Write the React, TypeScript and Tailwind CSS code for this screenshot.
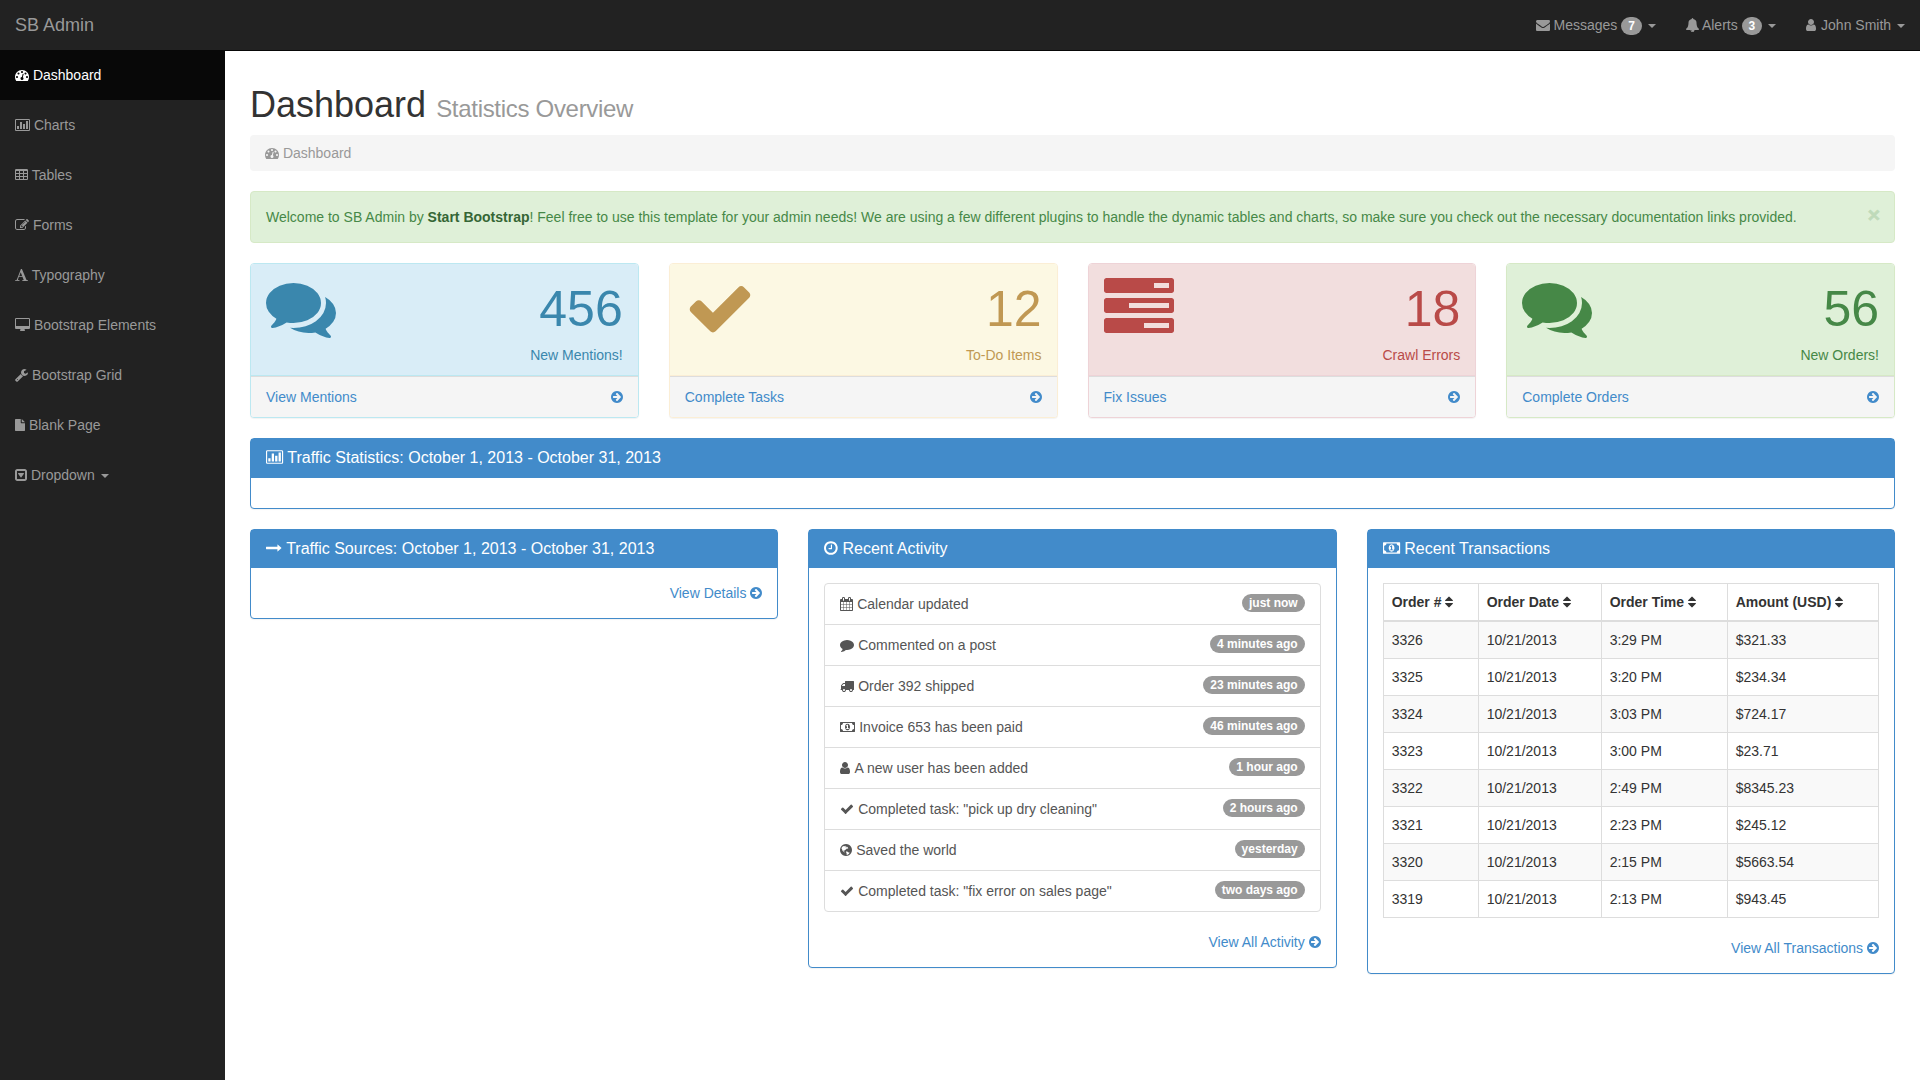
import { ReactElement, ReactNode } from "react"
import clsx from "clsx"

type Glyph = { x?: number; adv: number; d: string }

// glyphs sit on a 1792 unit em with the baseline at 1536
const glyphs = {
  dashboard: {
    adv: 1792,
    d: "M384 1152q0-53-37.5-90.5t-90.5-37.5-90.5 37.5-37.5 90.5 37.5 90.5 90.5 37.5 90.5-37.5 37.5-90.5zm192-448q0-53-37.5-90.5t-90.5-37.5-90.5 37.5-37.5 90.5 37.5 90.5 90.5 37.5 90.5-37.5 37.5-90.5zm428 481l101-382q6-26-7.5-48.5t-38.5-29.5-48 6.5-30 39.5l-101 382q-60 5-107 43.5t-63 98.5q-20 77 20 146t117 89 146-20 89-117q16-60-6-117t-72-91zm660-33q0-53-37.5-90.5t-90.5-37.5-90.5 37.5-37.5 90.5 37.5 90.5 90.5 37.5 90.5-37.5 37.5-90.5zm-640-640q0-53-37.5-90.5t-90.5-37.5-90.5 37.5-37.5 90.5 37.5 90.5 90.5 37.5 90.5-37.5 37.5-90.5zm448 192q0-53-37.5-90.5t-90.5-37.5-90.5 37.5-37.5 90.5 37.5 90.5 90.5 37.5 90.5-37.5 37.5-90.5zm320 448q0 261-141 483-19 29-54 29h-1402q-35 0-54-29-141-221-141-483 0-182 71-348t191-286 286-191 348-71 348 71 286 191 191 286 71 348z",
  },
  chart: {
    adv: 1920,
    d: "M512 1024v384h-256v-384zM896 512v896h-256v-896zM1280 768v640h-256v-640zM1664 384v1024h-256v-1024zM1792 1504v-1216q0-13-9.5-22.5t-22.5-9.5h-1600q-13 0-22.5 9.5t-9.5 22.5v1216q0 13 9.5 22.5t22.5 9.5h1600q13 0 22.5-9.5t9.5-22.5zM1920 288v1216q0 66-47 113t-113 47h-1600q-66 0-113-47t-47-113v-1216q0-66 47-113t113-47h1600q66 0 113 47t47 113z",
  },
  table: {
    x: 64,
    adv: 1664,
    d: "M192 416q0-32 32-32h320q32 0 32 32v192q0 32-32 32h-320q-32 0-32-32zM704 416q0-32 32-32h320q32 0 32 32v192q0 32-32 32h-320q-32 0-32-32zM1216 416q0-32 32-32h320q32 0 32 32v192q0 32-32 32h-320q-32 0-32-32zM192 800q0-32 32-32h320q32 0 32 32v192q0 32-32 32h-320q-32 0-32-32zM704 800q0-32 32-32h320q32 0 32 32v192q0 32-32 32h-320q-32 0-32-32zM1216 800q0-32 32-32h320q32 0 32 32v192q0 32-32 32h-320q-32 0-32-32zM192 1184q0-32 32-32h320q32 0 32 32v192q0 32-32 32h-320q-32 0-32-32zM704 1184q0-32 32-32h320q32 0 32 32v192q0 32-32 32h-320q-32 0-32-32zM1216 1184q0-32 32-32h320q32 0 32 32v192q0 32-32 32h-320q-32 0-32-32zM1728 288v1088q0 66-47 113t-113 47h-1344q-66 0-113-47t-47-113v-1088q0-66 47-113t113-47h1344q66 0 113 47t47 113z",
  },
  edit: {
    adv: 1792,
    d: "M888 1184l116-116-152-152-116 116v56h96v96h56zm440-720q-16-16-33 1l-350 350q-17 17-1 33t33-1l350-350q17-17 1-33zm80 594v190q0 119-84.5 203.5t-203.5 84.5h-832q-119 0-203.5-84.5t-84.5-203.5v-832q0-119 84.5-203.5t203.5-84.5h832q63 0 117 25 15 7 18 23 3 17-9 29l-49 49q-14 14-32 8-23-6-45-6h-832q-66 0-113 47t-47 113v832q0 66 47 113t113 47h832q66 0 113-47t47-113v-126q0-13 9-22l64-64q15-15 35-7t20 29zm-96-738l288 288-672 672h-288v-288zm444 132l-92 92-288-288 92-92q28-28 68-28t68 28l152 152q28 28 28 68t-28 68z",
  },
  font: {
    x: 64,
    adv: 1664,
    d: "M789 559l-170 450q33 0 136.5 2t160.5 2q19 0 57-2-87-253-184-452zm-725 1105l2-79q23-7 56-12.5t57-10.5 49.5-14.5 44.5-29 31-50.5l237-616 280-724h128q8 14 11 21l205 480q33 78 106 257.5t114 274.5q15 34 58 144.5t72 168.5q20 45 35 57 19 15 88 29.5t84 20.5q6 38 6 57 0 4-.5 13t-.5 13q-63 0-190-8t-191-8q-76 0-215 7t-178 8q0-43 4-78l131-28q1 0 12.5-2.5t15.5-3.5 14.5-4.5 15-6.5 11-8 9-11 2.5-14q0-16-31-96.5t-72-177.5-42-100l-450-2q-26 58-76.5 195.5t-50.5 162.5q0 22 14 37.5t43.5 24.5 48.5 13.5 57 8.5 41 4q1 19 1 58 0 9-2 27-58 0-174.5-10t-174.5-10q-8 0-26.5 4t-21.5 4q-80 14-188 14z",
  },
  desktop: {
    adv: 1920,
    d: "M1792 992v-832q0-13-9.5-22.5t-22.5-9.5h-1600q-13 0-22.5 9.5t-9.5 22.5v832q0 13 9.5 22.5t22.5 9.5h1600q13 0 22.5-9.5t9.5-22.5zM1920 160v1088q0 66-47 113t-113 47h-544q0 37 16 77.5t32 71 16 43.5q0 26-19 45t-45 19h-512q-26 0-45-19t-19-45q0-14 16-44t32-70 16-78h-544q-66 0-113-47t-47-113v-1088q0-66 47-113t113-47h1600q66 0 113 47t47 113z",
  },
  wrench: {
    x: 64,
    adv: 1664,
    d: "M448 1472q0-26-19-45t-45-19-45 19-19 45 19 45 45 19 45-19 19-45zm644-420l-682 682q-37 37-90 37-52 0-91-37l-106-108q-38-36-38-90 0-53 38-91l681-681q39 98 114.5 173.5t173.5 114.5zm634-435q0 39-23 106-47 134-164.5 217.5t-258.5 83.5q-185 0-316.5-131.5t-131.5-316.5 131.5-316.5 316.5-131.5q58 0 121.5 16.5t107.5 46.5q16 11 16 28t-16 28l-293 169v224l193 107q5-3 79-48.5t135.5-81 70.5-35.5q15 0 23.5 10t8.5 25z",
  },
  file: {
    adv: 1280,
    d: "M96 128h640v448q0 40 28 68t68 28h448v896q0 40-28 68t-68 28h-1088q-40 0-68-28t-28-68v-1344q0-40 28-68t68-28zM864 128q20 10 34 24l358 358q14 14 24 34h-416z",
  },
  caretSquare: {
    adv: 1536,
    d: "M1145 675q18 35-5 66l-320 448q-19 27-52 27t-52-27l-320-448q-23-31-5-66 17-35 57-35h640q40 0 57 35zM1280 1376v-960q0-13-9.5-22.5t-22.5-9.5h-960q-13 0-22.5 9.5t-9.5 22.5v960q0 13 9.5 22.5t22.5 9.5h960q13 0 22.5-9.5t9.5-22.5zM1536 416v960q0 119-84.5 203.5t-203.5 84.5h-960q-119 0-203.5-84.5t-84.5-203.5v-960q0-119 84.5-203.5t203.5-84.5h960q119 0 203.5 84.5t84.5 203.5z",
  },
  envelope: {
    adv: 1792,
    d: "M1792 710v794q0 66-47 113t-113 47h-1472q-66 0-113-47t-47-113v-794q44 49 101 87 362 246 497 345 57 42 92.5 65.5t94.5 48 110 24.5h2q51 0 110-24.5t94.5-48 92.5-65.5q170-123 498-345 57-39 100-87zm0-294q0 79-49 151t-122 123q-376 261-468 325-10 7-42.5 31t-54 38.5-52 32.5-57.5 27-50 9h-2q-23 0-50-9t-57.5-27-52-32.5-54-38.5-42.5-31q-91-64-262-182.5t-205-142.5q-62-42-117-115.5t-55-136.5q0-78 41.5-130t118.5-52h1472q65 0 112.5 47t47.5 113z",
  },
  bell: {
    x: 64,
    adv: 1664,
    d: "M912 1696q0-16-16-16-59 0-101.5-42.5t-42.5-101.5q0-16-16-16t-16 16q0 73 51.5 124.5t124.5 51.5q16 0 16-16zm816-288q0 52-38 90t-90 38h-448q0 106-75 181t-181 75-181-75-75-181h-448q-52 0-90-38t-38-90q50-42 91-88t85-119.5 74.5-158.5 50-206 19.5-260q0-152 117-282.5t307-158.5q-8-19-8-39 0-40 28-68t68-28 68 28 28 68q0 20-8 39 190 28 307 158.5t117 282.5q0 139 19.5 260t50 206 74.5 158.5 85 119.5 91 88z",
  },
  user: {
    x: 256,
    adv: 1408,
    d: "M1536 1399q0 109-62.5 187t-150.5 78h-854q-88 0-150.5-78t-62.5-187q0-85 8.5-160.5t31.5-152 58.5-131 94-89 134.5-34.5q131 128 313 128t313-128q76 0 134.5 34.5t94 89 58.5 131 31.5 152 8.5 160.5zm-256-887q0 159-112.5 271.5t-271.5 112.5-271.5-112.5-112.5-271.5 112.5-271.5 271.5-112.5 271.5 112.5 112.5 271.5z",
  },
  comments: {
    adv: 1792,
    d: "M1408 768q0 139-94 257t-256.5 186.5-353.5 68.5q-86 0-176-16-124 88-278 128-36 9-86 16h-3q-11 0-20.5-8t-11.5-21q-1-3-1-6.5t.5-6.5 2-6l2.5-5t3.5-5.5 4-5 4.5-5 4-4.5q5-6 23-25t26-29.5 22.5-29 25-38.5 20.5-44q-124-72-195-177t-71-224q0-139 94-257t256.5-186.5 353.5-68.5 353.5 68.5 256.5 186.5 94 257zm384 256q0 120-71 224.5t-195 176.5q10 24 20.5 44t25 38.5 22.5 29 26 29.5 23 25q1 1 4 4.5t4.5 5 4 5 3.5 5.5l2.5 5t2 6 .5 6.5-1 6.5q-3 14-13 22t-22 7q-50-7-86-16-154-40-278-128-90 16-176 16-271 0-472-132 58 4 88 4 161 0 309-45t264-129q125-92 192-212t67-254q0-77-23-152 129 71 204 178t75 230z",
  },
  check: {
    adv: 1792,
    d: "M1671 566q0 40-28 68l-724 724-136 136q-28 28-68 28t-68-28l-136-136-362-362q-28-28-28-68t28-68l136-136q28-28 68-28t68 28l294 295 656-657q28-28 68-28t68 28l136 136q28 28 28 68z",
  },
  tasks: {
    adv: 1792,
    d: "M1024 1408h640v-128h-640zM640 896h1024v-128h-1024zM1280 384h384v-128h-384zM1792 1216v256q0 26-19 45t-45 19h-1664q-26 0-45-19t-19-45v-256q0-26 19-45t45-19h1664q26 0 45 19t19 45zM1792 704v256q0 26-19 45t-45 19h-1664q-26 0-45-19t-19-45v-256q0-26 19-45t45-19h1664q26 0 45 19t19 45zM1792 192v256q0 26-19 45t-45 19h-1664q-26 0-45-19t-19-45v-256q0-26 19-45t45-19h1664q26 0 45 19t19 45z",
  },
  arrowCircle: {
    x: 128,
    adv: 1536,
    d: "M1413 896q0-27-18-45l-91-91-362-362q-18-18-45-18t-45 18l-91 91q-18 18-18 45t18 45l189 189h-502q-26 0-45 19t-19 45v128q0 26 19 45t45 19h502l-189 189q-19 19-19 45t19 45l91 91q18 18 45 18t45-18l362-362 91-91q18-18 18-45zm251 0q0 209-103 385.5t-279.5 279.5-385.5 103-385.5-103-279.5-279.5-103-385.5 103-385.5 279.5-279.5 385.5-103 385.5 103 279.5 279.5 103 385.5z",
  },
  longArrow: {
    adv: 1792,
    d: "M1728 893q0 14-10 24l-384 354q-16 14-35 6-19-9-19-29v-224h-1248q-14 0-23-9t-9-23v-192q0-14 9-23t23-9h1248v-224q0-21 19-29t35 5l384 350q10 10 10 23z",
  },
  clock: {
    x: 128,
    adv: 1536,
    d: "M1024 544v448q0 14-9 23t-23 9h-320q-14 0-23-9t-9-23v-64q0-14 9-23t23-9h224v-352q0-14 9-23t23-9h64q14 0 23 9t9 23zm416 352q0-148-73-273t-198-198-273-73-273 73-198 198-73 273 73 273 198 198 273 73 273-73 198-198 73-273zm224 0q0 209-103 385.5t-279.5 279.5-385.5 103-385.5-103-279.5-279.5-103-385.5 103-385.5 279.5-279.5 385.5-103 385.5 103 279.5 279.5 103 385.5z",
  },
  money: {
    adv: 1920,
    d: "M768 1152h384v-96h-128v-448h-114l-148 137 77 80q42-37 55-57h2v288h-128zM1280 896q0 70-21 142t-59.5 134-101.5 101-138 39-138-39-101.5-101-59.5-134-21-142 21-142 59.5-134 101.5-101 138-39 138 39 101.5 101 59.5 134 21 142zM1792 1152v-512q-106 0-181-75t-75-181h-1152q0 106-75 181t-181 75v512q106 0 181 75t75 181h1152q0-106 75-181t181-75zM1920 320v1152q0 26-19 45t-45 19h-1792q-26 0-45-19t-19-45v-1152q0-26 19-45t45-19h1792q26 0 45 19t19 45z",
  },
  calendar: {
    x: 64,
    adv: 1664,
    d: "M192 1664h288v-288h-288zM544 1664h320v-288h-320zM192 1312h288v-320h-288zM544 1312h320v-320h-320zM192 928h288v-288h-288zM928 1664h320v-288h-320zM544 928h320v-288h-320zM1312 1664h288v-288h-288zM928 1312h320v-320h-320zM576 448v-288q0-13-9.5-22.5t-22.5-9.5h-64q-13 0-22.5 9.5t-9.5 22.5v288q0 13 9.5 22.5t22.5 9.5h64q13 0 22.5-9.5t9.5-22.5zM1312 1312h288v-320h-288zM928 928h320v-288h-320zM1312 928h288v-288h-288zM1344 448v-288q0-13-9.5-22.5t-22.5-9.5h-64q-13 0-22.5 9.5t-9.5 22.5v288q0 13 9.5 22.5t22.5 9.5h64q13 0 22.5-9.5t9.5-22.5zM1728 384v1280q0 52-38 90t-90 38h-1408q-52 0-90-38t-38-90v-1280q0-52 38-90t90-38h128v-96q0-66 47-113t113-47h64q66 0 113 47t47 113v96h384v-96q0-66 47-113t113-47h64q66 0 113 47t47 113v96h128q52 0 90 38t38 90z",
  },
  comment: {
    adv: 1792,
    d: "M1792 896q0 174-120 321.5t-326 233-450 85.5q-70 0-145-8-198 175-460 242-49 14-114 22-17 2-30.5-9t-17.5-29v-1q-3-4-.5-12t2-10 4.5-9.5l6-9 7-8.5 8-9q7-8 31-34.5t34.5-38 31-39.5 32.5-51 27-59 26-76q-157-89-247.5-220t-90.5-281q0-130 71-248.5t191-204.5 286-136.5 348-50.5q244 0 450 85.5t326 233 120 321.5z",
  },
  truck: {
    adv: 1792,
    d: "M640 1408q0-52-38-90t-90-38-90 38-38 90 38 90 90 38 90-38 38-90zM256 896h384v-256h-158q-13 0-22 9l-195 195q-9 9-9 22v30zM1536 1408q0-52-38-90t-90-38-90 38-38 90 38 90 90 38 90-38 38-90zM1792 320v1024q0 15-4 26.5t-13.5 18.5-16.5 11.5-23.5 6-22.5 2-25.5 0-22.5-.5q0 106-75 181t-181 75-181-75-75-181h-384q0 106-75 181t-181 75-181-75-75-181h-64q-3 0-22.5.5t-25.5 0-22.5-2-23.5-6-16.5-11.5-13.5-18.5-4-26.5q0-26 19-45t45-19v-320q0-8-.5-35t0-38 2.5-34.5 6.5-37 14-30.5 22.5-30l198-198q19-19 50.5-32t58.5-13h160v-192q0-26 19-45t45-19h1024q26 0 45 19t19 45z",
  },
  globe: {
    x: 128,
    adv: 1536,
    d: "M896 128q209 0 385.5 103t279.5 279.5 103 385.5-103 385.5-279.5 279.5-385.5 103-385.5-103-279.5-279.5-103-385.5 103-385.5 279.5-279.5 385.5-103zM420 480l180-110 120 40 110-50 60 70-90 90 130 40 40-110 110 60 110 150-120 60-60-20-130 120-110 70-20 100-90-50-90 50 20 90 90 20 50 110-130-50-150-170-60-200-80-130zM900 1080l150 10 180 110 130 30-80 140-130 110-130 70-60-110 20-160-100-110z",
  },
  sort: {
    x: 384,
    adv: 1024,
    d: "M1408 1088q0 26-19 45l-448 448q-19 19-45 19t-45-19l-448-448q-19-19-19-45t19-45 45-19h896q26 0 45 19t19 45zm0-384q0 26-19 45t-45 19h-896q-26 0-45-19t-19-45 19-45l448-448q19-19 45-19t45 19l448 448q19 19 19 45z",
  },
} satisfies Record<string, Glyph>

type IconName = keyof typeof glyphs

function Icon({ name, className }: { name: IconName; className?: string }): ReactElement {
  const glyph: Glyph = glyphs[name]
  return (
    <svg
      className={clsx("inline overflow-visible align-[-0.143em]", className)}
      width={`${glyph.adv / 1792}em`}
      height="1em"
      viewBox={`${glyph.x ?? 0} 0 ${glyph.adv} 1792`}
      fill="currentColor"
      fillRule="evenodd"
      aria-hidden="true"
    >
      <path d={glyph.d} />
    </svg>
  )
}

function Caret(): ReactElement {
  return (
    <span className="ml-0.5 inline-block border-x-4 border-t-4 border-x-transparent border-t-current align-middle" />
  )
}

function Badge({ children }: { children: ReactNode }): ReactElement {
  return (
    <span className="inline-block rounded-[10px] bg-[#999] px-[7px] py-[3px] text-center align-baseline text-xs leading-none font-bold whitespace-nowrap text-white">
      {children}
    </span>
  )
}

const menu: { icon: IconName; label: string; caret?: boolean }[] = [
  { icon: "dashboard", label: "Dashboard" },
  { icon: "chart", label: "Charts" },
  { icon: "table", label: "Tables" },
  { icon: "edit", label: "Forms" },
  { icon: "font", label: "Typography" },
  { icon: "desktop", label: "Bootstrap Elements" },
  { icon: "wrench", label: "Bootstrap Grid" },
  { icon: "file", label: "Blank Page" },
  { icon: "caretSquare", label: "Dropdown", caret: true },
]

const stats: {
  icon: IconName
  value: number
  label: string
  link: string
  border: string
  heading: string
}[] = [
  {
    icon: "comments",
    value: 456,
    label: "New Mentions!",
    link: "View Mentions",
    border: "border-[#bce8f1]",
    heading: "bg-[#d9edf7] text-[#3a87ad]",
  },
  {
    icon: "check",
    value: 12,
    label: "To-Do Items",
    link: "Complete Tasks",
    border: "border-[#fbeed5]",
    heading: "bg-[#fcf8e3] text-[#c09853]",
  },
  {
    icon: "tasks",
    value: 18,
    label: "Crawl Errors",
    link: "Fix Issues",
    border: "border-[#eed3d7]",
    heading: "bg-[#f2dede] text-[#b94a48]",
  },
  {
    icon: "comments",
    value: 56,
    label: "New Orders!",
    link: "Complete Orders",
    border: "border-[#d6e9c6]",
    heading: "bg-[#dff0d8] text-[#468847]",
  },
]

const activity: { icon: IconName; text: string; time: string }[] = [
  { icon: "calendar", text: "Calendar updated", time: "just now" },
  { icon: "comment", text: "Commented on a post", time: "4 minutes ago" },
  { icon: "truck", text: "Order 392 shipped", time: "23 minutes ago" },
  { icon: "money", text: "Invoice 653 has been paid", time: "46 minutes ago" },
  { icon: "user", text: "A new user has been added", time: "1 hour ago" },
  { icon: "check", text: 'Completed task: "pick up dry cleaning"', time: "2 hours ago" },
  { icon: "globe", text: "Saved the world", time: "yesterday" },
  { icon: "check", text: 'Completed task: "fix error on sales page"', time: "two days ago" },
]

const columns = [
  { label: "Order #", width: "w-[95px]" },
  { label: "Order Date", width: "w-[123px]" },
  { label: "Order Time", width: "w-[126px]" },
  { label: "Amount (USD)", width: "" },
]

const orders = [
  ["3326", "10/21/2013", "3:29 PM", "$321.33"],
  ["3325", "10/21/2013", "3:20 PM", "$234.34"],
  ["3324", "10/21/2013", "3:03 PM", "$724.17"],
  ["3323", "10/21/2013", "3:00 PM", "$23.71"],
  ["3322", "10/21/2013", "2:49 PM", "$8345.23"],
  ["3321", "10/21/2013", "2:23 PM", "$245.12"],
  ["3320", "10/21/2013", "2:15 PM", "$5663.54"],
  ["3319", "10/21/2013", "2:13 PM", "$943.45"],
]

function Panel({
  icon,
  title,
  children,
}: {
  icon: IconName
  title: string
  children?: ReactNode
}): ReactElement {
  return (
    <section className="mb-5 rounded-sm border border-[#428bca] bg-white shadow-[0_1px_1px_rgba(0,0,0,0.05)]">
      <div className="border-b border-[#428bca] bg-[#428bca] px-[15px] py-2.5 text-white">
        <h3 className="text-base leading-[1.1]">
          <Icon name={icon} /> {title}
        </h3>
      </div>
      <div className="p-[15px]">{children}</div>
    </section>
  )
}

function MoreLink({ children }: { children: ReactNode }): ReactElement {
  return (
    <div className="text-right">
      <a href="#" className="text-[#428bca]">
        {children} <Icon name="arrowCircle" />
      </a>
    </div>
  )
}

function Navbar(): ReactElement {
  return (
    <nav className="flex h-[51px] justify-between border-b border-[#080808] bg-[#222] text-[#999]">
      <a href="#" className="p-[15px] text-lg leading-5">
        SB Admin
      </a>
      <ul className="flex">
        <li className="p-[15px]">
          <Icon name="envelope" /> Messages <Badge>7</Badge> <Caret />
        </li>
        <li className="p-[15px]">
          <Icon name="bell" /> Alerts <Badge>3</Badge> <Caret />
        </li>
        <li className="p-[15px]">
          <Icon name="user" /> John Smith <Caret />
        </li>
      </ul>
    </nav>
  )
}

function Sidebar(): ReactElement {
  return (
    <ul className="w-[225px] shrink-0 bg-[#222] text-[#999]">
      {menu.map(({ icon, label, caret }, i) => (
        <li
          key={label}
          className={clsx("px-[15px] pb-[15px]", i === 0 ? "bg-[#080808] pt-3.5 text-white" : "pt-[15px]")}
        >
          <Icon name={icon} /> {label} {caret && <Caret />}
        </li>
      ))}
    </ul>
  )
}

export default function App(): ReactElement {
  return (
    <div className="flex min-h-screen flex-col bg-white font-['Liberation_Sans',Arial,sans-serif] text-sm leading-5 text-[#333]">
      <Navbar />
      <div className="flex grow">
        <Sidebar />
        <main className="grow px-[25px] pt-[34px]">
          <h1 className="mb-2.5 text-4xl leading-[1.1]">
            Dashboard{" "}
            <small className="text-2xl leading-none tracking-[-0.3px] text-[#999]">Statistics Overview</small>
          </h1>
          <div className="mb-5 rounded-sm bg-[#f5f5f5] px-[15px] py-2 text-[#999]">
            <Icon name="dashboard" /> Dashboard
          </div>
          <div className="mb-5 flex justify-between rounded-sm border border-[#d6e9c6] bg-[#dff0d8] py-[15px] pr-3.5 pl-[15px] text-[#468847]">
            <p>
              Welcome to SB Admin by{" "}
              <a href="#" className="font-bold text-[#356635]">
                Start Bootstrap
              </a>
              ! Feel free to use this template for your admin needs! We are using a few different plugins to
              handle the dynamic tables and charts, so make sure you check out the necessary documentation links
              provided.
            </p>
            <button className="-mt-[3px] h-5 text-[21px] leading-none font-bold opacity-20 [-webkit-text-stroke:0.8px_currentColor] [text-shadow:0_1px_0_#fff]">
              ×
            </button>
          </div>

          <div className="grid grid-cols-4 gap-[30px]">
            {stats.map(({ icon, value, label, link, border, heading }) => (
              <section
                key={link}
                className={clsx(
                  "mb-5 overflow-hidden rounded-sm border bg-white shadow-[0_1px_1px_rgba(0,0,0,0.05)]",
                  border,
                )}
              >
                <div className={clsx("flex justify-between border-b px-[15px] py-2.5", border, heading)}>
                  <Icon name={icon} className="-mt-px text-[70px]" />
                  <div className="text-right">
                    <p className="text-[50px] leading-[71.4px]">{value}</p>
                    <p>{label}</p>
                  </div>
                </div>
                <a
                  href="#"
                  className="flex justify-between border-t border-[#ddd] bg-[#f5f5f5] px-[15px] py-2.5 text-[#428bca]"
                >
                  <span>{link}</span>
                  <span>
                    <Icon name="arrowCircle" />
                  </span>
                </a>
              </section>
            ))}
          </div>

          <Panel icon="chart" title="Traffic Statistics: October 1, 2013 - October 31, 2013" />

          <div className="grid grid-cols-3 items-start gap-[30px]">
            <Panel icon="longArrow" title="Traffic Sources: October 1, 2013 - October 31, 2013">
              <MoreLink>View Details</MoreLink>
            </Panel>
            <Panel icon="clock" title="Recent Activity">
              <ul className="mb-5 divide-y divide-[#ddd] rounded-sm border border-[#ddd] text-[#555]">
                {activity.map(({ icon, text, time }) => (
                  <li key={text} className="flex items-start justify-between px-[15px] py-2.5">
                    <span>
                      <Icon name={icon} /> {text}
                    </span>
                    <Badge>{time}</Badge>
                  </li>
                ))}
              </ul>
              <MoreLink>View All Activity</MoreLink>
            </Panel>
            <Panel icon="money" title="Recent Transactions">
              <table className="mb-5 w-full table-fixed border-collapse border border-[#ddd]">
                <thead>
                  <tr>
                    {columns.map(({ label, width }) => (
                      <th key={label} className={clsx("border border-b-2 border-[#ddd] p-2 text-left", width)}>
                        {label} <Icon name="sort" />
                      </th>
                    ))}
                  </tr>
                </thead>
                <tbody>
                  {orders.map((order) => (
                    <tr key={order[0]} className="odd:bg-[#f9f9f9]">
                      {order.map((cell) => (
                        <td key={cell} className="border border-[#ddd] p-2">
                          {cell}
                        </td>
                      ))}
                    </tr>
                  ))}
                </tbody>
              </table>
              <MoreLink>View All Transactions</MoreLink>
            </Panel>
          </div>
        </main>
      </div>
    </div>
  )
}
